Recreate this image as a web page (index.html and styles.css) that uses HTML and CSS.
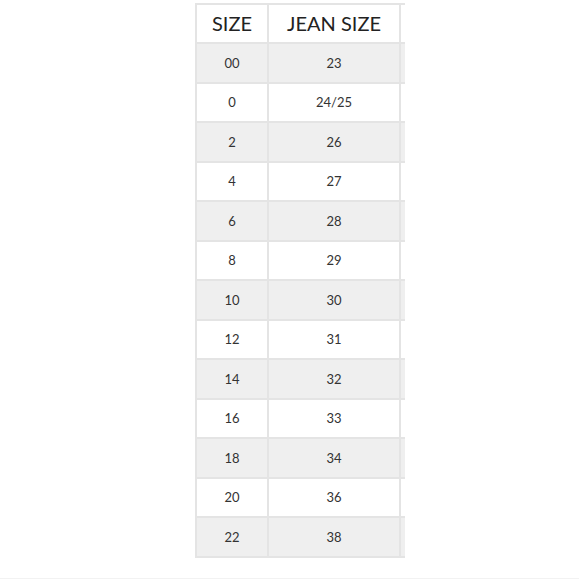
FILE: index.html
```html
<!DOCTYPE html>
<html>
<head>
<meta charset="utf-8">
<link rel="stylesheet" href="styles.css">
</head>
<body>
<div class="page">
  <div class="clip">
    <table class="chart">
      <thead>
        <tr><th class="c1">SIZE</th><th class="c2">JEAN SIZE</th><th class="c3"></th></tr>
      </thead>
      <tbody>
        <tr class="alt"><td>00</td><td>23</td><td></td></tr>
        <tr><td>0</td><td>24/25</td><td></td></tr>
        <tr class="alt"><td>2</td><td>26</td><td></td></tr>
        <tr><td>4</td><td>27</td><td></td></tr>
        <tr class="alt"><td>6</td><td>28</td><td></td></tr>
        <tr><td>8</td><td>29</td><td></td></tr>
        <tr class="alt"><td>10</td><td>30</td><td></td></tr>
        <tr><td>12</td><td>31</td><td></td></tr>
        <tr class="alt"><td>14</td><td>32</td><td></td></tr>
        <tr><td>16</td><td>33</td><td></td></tr>
        <tr class="alt"><td>18</td><td>34</td><td></td></tr>
        <tr><td>20</td><td>36</td><td></td></tr>
        <tr class="alt"><td>22</td><td>38</td><td></td></tr>
      </tbody>
    </table>
  </div>
  <div class="rule"></div>
</div>
</body>
</html>
```
FILE: styles.css
```css
html, body {
  margin: 0;
  padding: 0;
  background: #fff;
}
.page {
  width: 579px;
  height: 580px;
  position: relative;
  overflow: hidden;
}
.clip {
  margin-left: 195px;
  margin-top: 3px;
  width: 210px;
  overflow: hidden;
}
.chart {
  border-collapse: collapse;
  table-layout: fixed;
  width: 300px;
  font-family: Lato, "Open Sans", sans-serif;
  color: #333;
}
.chart th, .chart td {
  border: 2px solid #e4e4e4;
  text-align: center;
  padding: 0;
}
.chart th {
  height: 35px;
  padding-bottom: 2px;
  font-size: 20px;
  font-weight: 400;
  color: #222;
}
.chart td {
  height: 37.5px;
  font-size: 13px;
}
.c1 { width: 70px; }
.c2 { width: 130px; }
.c3 { width: 96px; }
.alt td {
  background: #efefef;
}
.rule {
  position: absolute;
  left: 0;
  right: 0;
  top: 578px;
  height: 1px;
  background: #f2f2f2;
}
```
